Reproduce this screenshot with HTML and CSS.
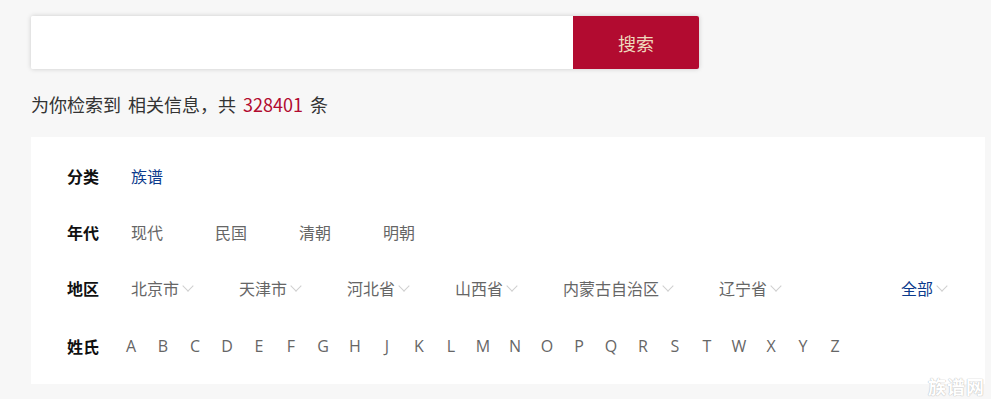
FILE: index.html
```html
<!DOCTYPE html>
<html>
<head>
	<title>族谱搜索</title>
	<link rel="stylesheet" href="styles.css">
</head>
<body>
	<div class="search">
		<input class="search-input" type="text">
		<button class="search-btn">搜索</button>
	</div>
	<div class="summary">为你检索到 相关信息，共 <span class="count">328401</span> 条</div>
	<div class="filter">
		<div class="row">
			<div class="label">分类</div>
			<a class="opt active">族谱</a>
		</div>
		<div class="row">
			<div class="label">年代</div>
			<a class="opt era">现代</a>
			<a class="opt era">民国</a>
			<a class="opt era">清朝</a>
			<a class="opt era">明朝</a>
		</div>
		<div class="row">
			<div class="label">地区</div>
			<a class="opt area">北京市<i class="arrow"></i></a>
			<a class="opt area">天津市<i class="arrow"></i></a>
			<a class="opt area">河北省<i class="arrow"></i></a>
			<a class="opt area">山西省<i class="arrow"></i></a>
			<a class="opt area">内蒙古自治区<i class="arrow"></i></a>
			<a class="opt area">辽宁省<i class="arrow"></i></a>
			<a class="opt all">全部<i class="arrow"></i></a>
		</div>
		<div class="row">
			<div class="label">姓氏</div>
			<div class="letters">
				<a class="letter">A</a><a class="letter">B</a><a class="letter">C</a><a class="letter">D</a><a class="letter">E</a><a class="letter">F</a><a class="letter">G</a><a class="letter">H</a><a class="letter">J</a><a class="letter">K</a><a class="letter">L</a><a class="letter">M</a><a class="letter">N</a><a class="letter">O</a><a class="letter">P</a><a class="letter">Q</a><a class="letter">R</a><a class="letter">S</a><a class="letter">T</a><a class="letter">W</a><a class="letter">X</a><a class="letter">Y</a><a class="letter">Z</a>
			</div>
		</div>
	</div>
	<div class="watermark">族谱网</div>
</body>
</html>
```

FILE: styles.css
```css
body {
	margin: 0;
	padding: 16px 6px 0 31px;
	background: #f7f7f7;
	font-family: "Noto Sans CJK SC", "Open Sans", sans-serif;
	color: #333;
	height: 399px;
	box-sizing: border-box;
	overflow: hidden;
}

.search {
	display: flex;
	width: 668px;
	height: 53px;
	box-shadow: 0 0 5px rgba(0, 0, 0, 0.18);
	border-radius: 2px;
}

.search-input {
	flex: 1;
	border: none;
	background: #fff;
	outline: none;
	padding: 0 12px;
	border-radius: 2px 0 0 2px;
}

.search-btn {
	width: 126px;
	border: none;
	background: #b20b30;
	color: #eed9bd;
	font-family: inherit;
	font-size: 18px;
	border-radius: 0 2px 2px 0;
	cursor: pointer;
}

.summary {
	margin-top: 21px;
	font-size: 18px;
	line-height: 28px;
	word-spacing: 3px;
	color: #333;
}

.count {
	color: #b20b30;
}

.filter {
	margin-top: 19px;
	width: 954px;
	background: #fff;
	padding: 11px 36px 10px;
	box-sizing: border-box;
}

.row {
	display: flex;
	align-items: center;
	height: 56px;
	font-size: 16px;
}

.row:last-child {
	padding-top: 2px;
}

.label {
	width: 64px;
	font-size: 16px;
	font-weight: bold;
	color: #111;
}

.opt {
	display: flex;
	align-items: center;
	color: #666;
	cursor: pointer;
}

.opt.active {
	color: #0b3a8c;
}

.era {
	margin-right: 52px;
}

.area {
	margin-right: 44px;
}

.all {
	margin-left: auto;
	color: #0b3a8c;
}

.arrow {
	display: inline-block;
	width: 7px;
	height: 7px;
	margin: -5px 3px 0 5px;
	border-right: 1px solid #cfcfcf;
	border-bottom: 1px solid #cfcfcf;
	transform: rotate(45deg);
}

.letters {
	display: flex;
	margin-left: -16px;
}

.letter {
	width: 32px;
	text-align: center;
	color: #666;
	font-family: "Open Sans", "Noto Sans", sans-serif;
	font-size: 16px;
	cursor: pointer;
}

.watermark {
	position: absolute;
	right: 6px;
	bottom: 2px;
	font-size: 18px;
	line-height: 22px;
	font-weight: bold;
	color: #fff;
	text-shadow: 0 0 1px #bbb, 0 0 1px #bbb;
	letter-spacing: 1px;
}
```
